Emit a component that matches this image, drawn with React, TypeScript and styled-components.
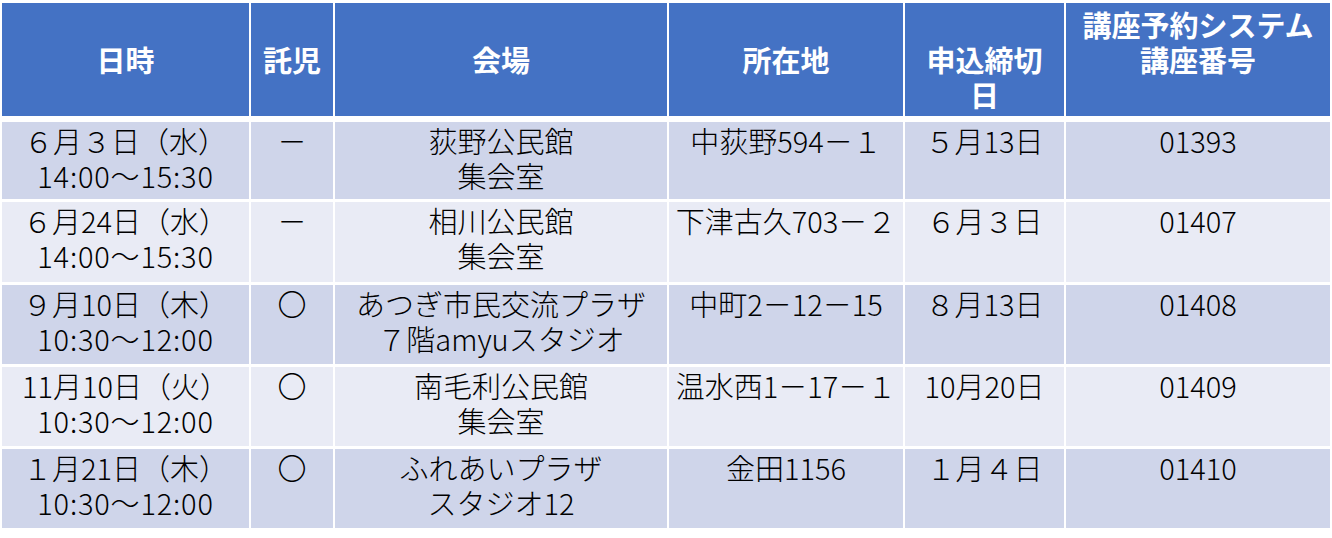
import React from "react";
import styled, { createGlobalStyle } from "styled-components";

interface Course {
    date: string;
    time: string;
    care: string;
    venue: string[];
    address: string;
    deadline: string;
    code: string;
}

const courses: Course[] = [
    { date: "６月３日（水）", time: "14:00～15:30", care: "－", venue: ["荻野公民館", "集会室"], address: "中荻野594－１", deadline: "５月13日", code: "01393" },
    { date: "６月24日（水）", time: "14:00～15:30", care: "－", venue: ["相川公民館", "集会室"], address: "下津古久703－２", deadline: "６月３日", code: "01407" },
    { date: "９月10日（木）", time: "10:30～12:00", care: "〇", venue: ["あつぎ市民交流プラザ", "７階amyuスタジオ"], address: "中町2－12－15", deadline: "８月13日", code: "01408" },
    { date: "11月10日（火）", time: "10:30～12:00", care: "〇", venue: ["南毛利公民館", "集会室"], address: "温水西1－17－１", deadline: "10月20日", code: "01409" },
    { date: "１月21日（木）", time: "10:30～12:00", care: "〇", venue: ["ふれあいプラザ", "スタジオ12"], address: "金田1156", deadline: "１月４日", code: "01410" },
];

const rowHeights = [77, 80, 79, 79, 79];

const ScheduleTable = () => {
    return (
        <Table>
            <HeadRow>
                <HeadCell><span>日時</span></HeadCell>
                <HeadCell><span>託児</span></HeadCell>
                <HeadCell><span>会場</span></HeadCell>
                <HeadCell><span>所在地</span></HeadCell>
                <HeadCell><span>&nbsp;</span><span>申込締切</span><span>日</span></HeadCell>
                <HeadCell><span>講座予約システム</span><span>講座番号</span><span>&nbsp;</span></HeadCell>
            </HeadRow>
            {courses.map((c, i) => (
                <BodyRow key={c.code} $striped={i % 2 === 1} style={{ height: rowHeights[i] }}>
                    <Cell>
                        <span>{c.date}</span>
                        <Time>{c.time}</Time>
                    </Cell>
                    <Cell>{c.care}</Cell>
                    <Cell>
                        {c.venue.map((v) => (
                            <span key={v}>{v}</span>
                        ))}
                    </Cell>
                    <Cell>{c.address}</Cell>
                    <Cell>{c.deadline}</Cell>
                    <Cell>{c.code}</Cell>
                </BodyRow>
            ))}
        </Table>
    );
};

export default function App() {
    return (
        <>
            <GlobalStyle />
            <ScheduleTable />
        </>
    );
}

const GlobalStyle = createGlobalStyle`
    html, body {
        margin: 0;
        padding: 0;
        background: #ffffff;
    }
    body {
        font-family: "Noto Sans CJK JP", "Noto Sans", sans-serif;
    }
`;

const Table = styled.div`
    display: flex;
    flex-direction: column;
    gap: 3px;
    padding: 3px 2px;
    width: 1328px;
`;

const columns = "247px 82px 332px 234px 159px 264px";

const HeadRow = styled.div`
    display: grid;
    grid-template-columns: ${columns};
    column-gap: 2px;
    height: 113px;
    margin-bottom: 3px;
`;

const HeadCell = styled.div`
    background: #4472c4;
    color: #ffffff;
    font-size: 29px;
    font-weight: 700;
    line-height: 35px;
    display: flex;
    flex-direction: column;
    align-items: center;
    justify-content: center;
    text-align: center;
`;

const BodyRow = styled.div<{ $striped: boolean }>`
    display: grid;
    grid-template-columns: ${columns};
    column-gap: 2px;

    & > div {
        background: ${(p) => (p.$striped ? "#e9ebf5" : "#cfd5ea")};
    }
`;

const Cell = styled.div`
    color: #000000;
    font-size: 29px;
    font-weight: 300;
    line-height: 35px;
    padding-top: 1px;
    display: flex;
    flex-direction: column;
    align-items: center;
    text-align: center;
    white-space: pre;
`;

const Time = styled.span`
    letter-spacing: 0.8px;
`;
